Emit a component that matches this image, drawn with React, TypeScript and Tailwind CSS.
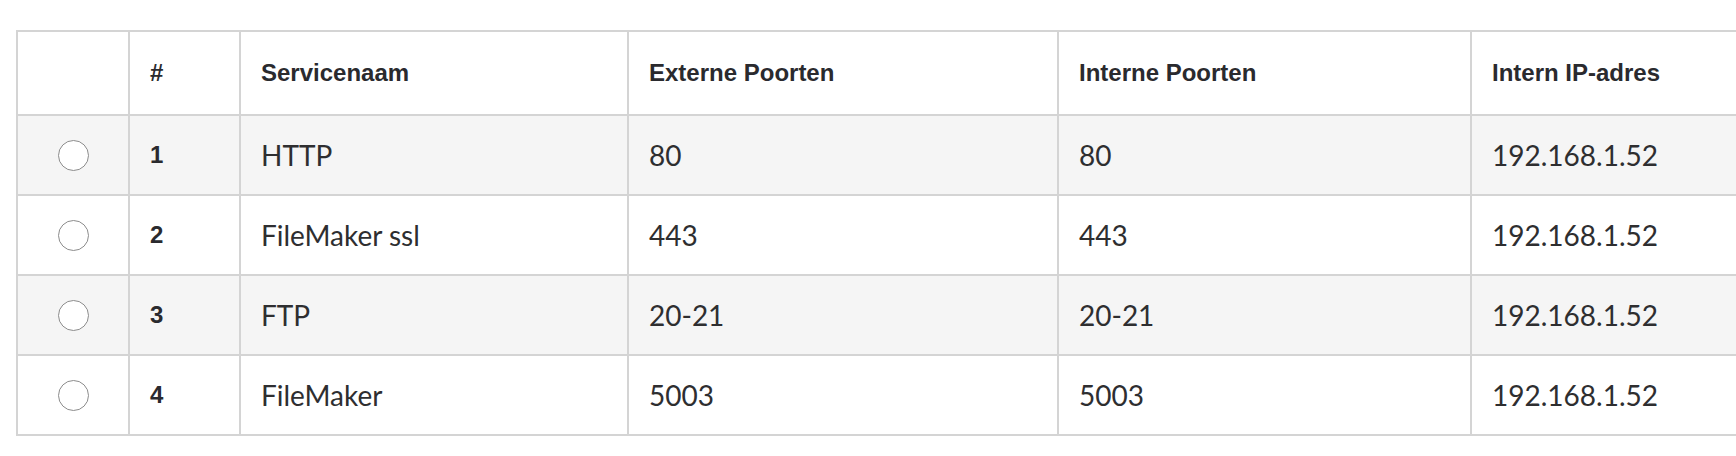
import React from "react";

const rows = [
  { n: 1, name: "HTTP", ext: "80", int: "80", ip: "192.168.1.52" },
  { n: 2, name: "FileMaker ssl", ext: "443", int: "443", ip: "192.168.1.52" },
  { n: 3, name: "FTP", ext: "20-21", int: "20-21", ip: "192.168.1.52" },
  { n: 4, name: "FileMaker", ext: "5003", int: "5003", ip: "192.168.1.52" },
];

const headFont = { fontFamily: '"Liberation Sans", Arial, sans-serif' };
const bodyFont = { fontFamily: 'Lato, "Open Sans", sans-serif' };

export default function App() {
  return (
    <div className="w-[1736px] h-[456px] bg-white overflow-hidden pt-[30px] pl-[16px]">
      <table className="border-collapse table-fixed w-[1900px]">
        <colgroup>
          <col className="w-[112px]" />
          <col className="w-[111px]" />
          <col className="w-[388px]" />
          <col className="w-[430px]" />
          <col className="w-[413px]" />
          <col className="w-[446px]" />
        </colgroup>
        <thead>
          <tr className="h-[84px] bg-white">
            <th className="border-2 border-[#d4d4d4]"></th>
            {["#", "Servicenaam", "Externe Poorten", "Interne Poorten", "Intern IP-adres"].map((h) => (
              <th
                key={h}
                style={headFont}
                className="border-2 border-[#d4d4d4] text-left font-bold text-[24px] leading-none text-[#2a2a2e] pl-[20px] align-middle"
              >
                {h}
              </th>
            ))}
          </tr>
        </thead>
        <tbody>
          {rows.map((r, i) => (
            <tr key={r.n} className={`h-[80px] ${i % 2 === 0 ? "bg-[#f5f5f5]" : "bg-white"}`}>
              <td className="border-2 border-[#d4d4d4] align-middle">
                <div className="flex justify-center">
                  <span className="block w-[31px] h-[31px] rounded-full border-[1.5px] border-[#8c8c8c] bg-white" />
                </div>
              </td>
              <td style={headFont} className="border-2 border-[#d4d4d4] pl-[20px] font-bold text-[24px] leading-none text-[#2a2a2e]">
                {r.n}
              </td>
              <td style={bodyFont} className="border-2 border-[#d4d4d4] pl-[20px] text-[28px] leading-none text-[#2e2e30]">
                {r.name}
              </td>
              <td style={bodyFont} className="border-2 border-[#d4d4d4] pl-[20px] text-[28px] leading-none text-[#2e2e30]">
                {r.ext}
              </td>
              <td style={bodyFont} className="border-2 border-[#d4d4d4] pl-[20px] text-[28px] leading-none text-[#2e2e30]">
                {r.int}
              </td>
              <td style={bodyFont} className="border-2 border-[#d4d4d4] pl-[20px] text-[28px] leading-none text-[#2e2e30]">
                {r.ip}
              </td>
            </tr>
          ))}
        </tbody>
      </table>
    </div>
  );
}
